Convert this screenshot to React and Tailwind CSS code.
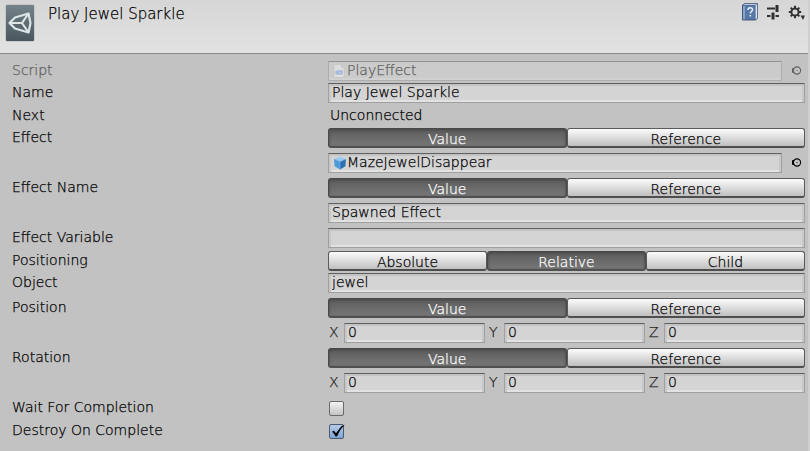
import React, { useId, useState } from "react";

const fieldBase =
  "h-5 min-w-0 border border-[#a0a0a0] border-t-[#5f5f5f] bg-[#d4d4d4] shadow-[inset_0_2px_0_#c3c3c3,inset_2px_0_0_#c8c8c8,inset_-2px_0_0_#c8c8c8,inset_0_-2px_0_#e2e2e2]";

function Row({ label, htmlFor, muted, children }) {
  return (
    <div className="grid grid-cols-[316px_minmax(0,1fr)]">
      {htmlFor ? (
        <label htmlFor={htmlFor} className="h-5 leading-[18px]">
          {label}
        </label>
      ) : (
        <span className={muted ? "h-5 leading-[18px] text-[#606060]" : "h-5 leading-[18px]"}>{label}</span>
      )}
      {children}
    </div>
  );
}

function TextField({ id, value, ariaLabel }) {
  return (
    <input
      id={id}
      type="text"
      aria-label={ariaLabel}
      defaultValue={value}
      className={`${fieldBase} w-full px-[3px] pb-0.5 leading-4 outline-none`}
    />
  );
}

function TextRow({ label, value }) {
  const id = useId();
  return (
    <Row label={label} htmlFor={id}>
      <TextField id={id} value={value} />
    </Row>
  );
}

function Segments({ label, options, initial }) {
  const [selected, setSelected] = useState(initial);
  return (
    <div role="group" aria-label={label} className="grid h-5 auto-cols-fr grid-flow-col">
      {options.map((option) => (
        <button
          key={option}
          type="button"
          aria-pressed={option === selected}
          onClick={() => setSelected(option)}
          className={
            option === selected
              ? "h-5 rounded-[3px] border border-[#484848] border-b-2 border-b-[#505050] bg-linear-to-b from-[#5c5c5c] to-[#777777] pt-0.5 leading-4 text-white shadow-[inset_0_1px_3px_#444444]"
              : "h-5 rounded-[3px] border border-[#5a5a5a] border-b-2 border-b-[#4e4e4e] bg-linear-to-b from-[#fcfcfc] to-[#c0c0c0] pt-0.5 leading-4"
          }
        >
          {option}
        </button>
      ))}
    </div>
  );
}

function PickerIcon() {
  return (
    <svg viewBox="0 0 11 11" className="size-[11px]" fill="none" stroke="currentColor" aria-hidden="true">
      <circle cx="6" cy="5.5" r="3.6" strokeWidth="1.1" />
      <path d="M1.5 3.5v4M1.5 3.5h2M1.5 7.5h2" strokeWidth="1" />
      <circle cx="6" cy="5.5" r="0.6" fill="currentColor" stroke="none" />
    </svg>
  );
}

function ScriptIcon() {
  return (
    <svg viewBox="0 0 12 14" className="h-3.5 w-3" aria-hidden="true">
      <path d="M1 .5h7l3 3v10H1z" fill="#dedede" stroke="#c0c0c0" strokeWidth=".6" />
      <path d="M8 .5v3h3" fill="#c4c4c4" />
      <rect x="2.5" y="6.5" width="7" height="4" rx="1" fill="#8faad5" />
      <path d="M5 7.5H3.7v2H5M6 7.5v2M8 7.5v2M5.6 8.1h3M5.6 9h3" stroke="#d5deee" strokeWidth=".5" fill="none" />
    </svg>
  );
}

function PrefabIcon() {
  return (
    <svg viewBox="0 0 14 14" className="size-3.5" aria-hidden="true">
      <path d="M7 .8l6 2.2-6 2.6L1 3z" fill="#9ccbf0" />
      <path d="M1 3l6 2.6v7.8L1.6 10.2z" fill="#4d9ada" />
      <path d="M13 3L7 5.6v7.8l5.4-3.2z" fill="#2f70b4" />
      <path d="M1 3l6 2.6L13 3M7 5.6v7.6" stroke="#77b5e8" strokeWidth=".6" fill="none" />
    </svg>
  );
}

function ObjectField({ label, icon, name, disabled }) {
  return (
    <div className={disabled ? "flex text-[#606060]" : "flex"}>
      <button
        type="button"
        disabled={disabled}
        aria-label={`${label}: ${name}`}
        className={
          disabled
            ? "flex h-5 min-w-0 flex-1 items-center border border-[#adadad] border-t-[#929292] bg-[#cbcbcb] pl-1 text-left shadow-[inset_0_-2px_0_#d1d1d1]"
            : `${fieldBase} flex flex-1 items-center pl-1 text-left`
        }
      >
        <span className="flex w-3.5 shrink-0">{icon}</span>
        <span className="h-5 leading-[18px]">{name}</span>
      </button>
      <button
        type="button"
        disabled={disabled}
        aria-label={`Select ${label}`}
        className="flex h-[18px] w-[23px] items-center justify-center pl-1.5"
      >
        <PickerIcon />
      </button>
    </div>
  );
}

function VectorField({ label }) {
  return (
    <div className="grid grid-cols-3 gap-[3px] pl-79">
      {["X", "Y", "Z"].map((axis) => (
        <label key={axis} className="flex text-[#202020]">
          <span className="h-5 w-4 shrink-0 pl-px leading-[18px]">{axis}</span>
          <span className="flex min-w-0 flex-1 text-black">
            <TextField value="0" ariaLabel={`${label} ${axis}`} />
          </span>
        </label>
      ))}
    </div>
  );
}

function ToggleRow({ label, initial }) {
  const id = useId();
  const [checked, setChecked] = useState(initial);
  return (
    <Row label={label} htmlFor={id}>
      <span className="grid h-5 items-center justify-items-start pl-px pt-px">
        <input
          id={id}
          type="checkbox"
          checked={checked}
          onChange={() => setChecked(!checked)}
          className="col-start-1 row-start-1 size-[15px] appearance-none rounded-[2px] border border-[#6a6a6a] bg-linear-to-b from-[#f4f4f4] to-[#c4c4c4] checked:border-[#4c5a70] checked:from-[#b5cbe8] checked:to-[#7fa3d4]"
        />
        {checked && (
          <svg viewBox="0 0 16 15" className="pointer-events-none col-start-1 row-start-1 h-[15px] w-4" aria-hidden="true">
            <path d="M3 7.5l2-.8 2 2.6L12.5 2l3.3-1.2C12 4.5 10.500 7.500 8 12.500H6.500C5.500 10.500 4.500 9 3 7.500z" fill="#080808" />
          </svg>
        )}
      </span>
    </Row>
  );
}

function AssetIcon() {
  return (
    <svg viewBox="0 0 30 38" className="h-[38px] w-[30px]" aria-hidden="true">
      <defs>
        <linearGradient id="asset-bg" x1="0" y1="0" x2="0" y2="1">
          <stop offset="0" stopColor="#738389" />
          <stop offset="1" stopColor="#48575d" />
        </linearGradient>
      </defs>
      <rect x=".5" y=".5" width="29" height="37" rx="1.500" fill="#a9a9a9" opacity=".7" />
      <rect x="1" y="1" width="28" height="36" rx="1" fill="url(#asset-bg)" />
      <g fill="none" stroke="#dce4e6" strokeWidth="2.200" strokeLinejoin="round">
        <path d="M4.500 19L10 13.500 23.500 9.500 25.500 19 23.500 28.500 10 24.500z" />
        <path d="M4.500 19H17M17 19L23.500 9.500M17 19l6.500 9.500" />
      </g>
    </svg>
  );
}

function BookIcon() {
  return (
    <svg viewBox="0 0 16 18" className="h-[18px] w-4" aria-hidden="true">
      <path d="M.5 2L2.500.7h13v14.500L13.500 17H.5z" fill="#45638f" stroke="#2d4366" strokeWidth=".8" />
      <path d="M13.500 2.500l1.700-1.500v14l-1.700 1.500z" fill="#dfe6ef" />
      <path d="M1.500 2L3 1.200h11.500L13.300 2z" fill="#eef2f7" />
      <rect x="1" y="2.500" width="2.200" height="14" fill="#87a4cd" />
      <rect x="3.200" y="2.500" width="10" height="14" fill="#5878a8" />
      <path d="M6 7c0-3 4.500-3 4.500-.3 0 1.800-2.200 1.800-2.200 3.800M8.300 12v1.500" stroke="#e8eff8" strokeWidth="1.500" fill="none" />
    </svg>
  );
}

function PresetIcon() {
  return (
    <svg viewBox="0 0 14 16" className="h-4 w-3.5" fill="#303030" aria-hidden="true">
      <rect x="1" y="3.500" width="8" height="2" />
      <rect x="9.500" y="1" width="3" height="7" rx=".5" />
      <rect x="1" y="11" width="3.500" height="2" />
      <rect x="5.500" y="8.500" width="3" height="7" rx=".5" />
      <rect x="9.500" y="11" width="3.500" height="2" />
    </svg>
  );
}

function GearIcon() {
  return (
    <svg viewBox="0 0 18 16" className="h-4 w-[18px]" aria-hidden="true">
      <circle cx="7" cy="7" r="3.600" fill="none" stroke="#333333" strokeWidth="2" />
      <path
        d="M7 .8v2.500M7 10.700v2.500M.8 7h2.500M10.700 7h2.500M2.600 2.600l1.800 1.800M9.600 9.600l1.800 1.800M2.600 11.400l1.800-1.800M9.600 4.400l1.800-1.800"
        stroke="#333333"
        strokeWidth="2"
      />
      <path d="M12.500 10.500h4.500l-2 4.500z" fill="#333333" />
    </svg>
  );
}

export default function App() {
  return (
    <main className="min-h-screen border-r-2 border-[#cfcfcf] bg-[#c2c2c2] font-['DejaVu_Sans',sans-serif] text-sm font-extralight text-black [-webkit-text-stroke:0.25px]">
      <header className="flex h-[54px] items-start border-b border-[#8a8a8a] bg-linear-to-b from-[#d6d6d6] to-[#e2e2e2] pl-[5px] pr-0.5">
        <div className="pt-1">
          <AssetIcon />
        </div>
        <h1 className="flex-1 pl-[13px] pt-1 text-[15px] leading-5 font-extralight">Play Jewel Sparkle</h1>
        <div className="flex items-start gap-2 pt-[3px]">
          <button type="button" aria-label="Help">
            <BookIcon />
          </button>
          <button type="button" aria-label="Presets" className="pt-px">
            <PresetIcon />
          </button>
          <button type="button" aria-label="Settings" className="pt-0.5">
            <GearIcon />
          </button>
        </div>
      </header>

      <form className="flex flex-col gap-[5px] pb-2.5 pl-3 pr-[3px] pt-[7px]">
        <div className="flex flex-col gap-0.5">
          <Row label="Script" muted>
            <ObjectField label="Script" icon={<ScriptIcon />} name="PlayEffect" disabled />
          </Row>
          <TextRow label="Name" value="Play Jewel Sparkle" />
          <div className="pt-px">
            <Row label="Next">
              <output className="pl-0.5 leading-[18px]">Unconnected</output>
            </Row>
          </div>
          <Row label="Effect">
            <Segments label="Effect source" options={["Value", "Reference"]} initial="Value" />
          </Row>
        </div>
        <div className="pl-79">
          <ObjectField label="Effect" icon={<PrefabIcon />} name="MazeJewelDisappear" />
        </div>
        <Row label="Effect Name">
          <Segments label="Effect Name source" options={["Value", "Reference"]} initial="Value" />
        </Row>
        <div className="flex pl-79">
          <TextField value="Spawned Effect" ariaLabel="Effect Name" />
        </div>
        <div className="flex flex-col gap-0.5">
          <TextRow label="Effect Variable" value="" />
          <div className="pt-px">
            <Row label="Positioning">
              <Segments label="Positioning" options={["Absolute", "Relative", "Child"]} initial="Relative" />
            </Row>
          </div>
          <TextRow label="Object" value="jewel" />
        </div>
        <Row label="Position">
          <Segments label="Position source" options={["Value", "Reference"]} initial="Value" />
        </Row>
        <VectorField label="Position" />
        <Row label="Rotation">
          <Segments label="Rotation source" options={["Value", "Reference"]} initial="Value" />
        </Row>
        <VectorField label="Rotation" />
        <div className="flex flex-col gap-[3px]">
          <ToggleRow label="Wait For Completion" initial={false} />
          <ToggleRow label="Destroy On Complete" initial={true} />
        </div>
      </form>
    </main>
  );
}
